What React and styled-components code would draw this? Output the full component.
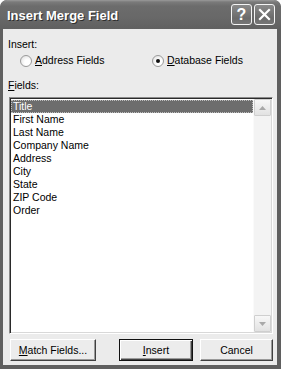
import React from "react";
import styled, { createGlobalStyle } from "styled-components";

const GlobalStyle = createGlobalStyle`
  html, body {
    margin: 0;
    padding: 0;
    background: #ffffff;
  }
  body {
    font-family: "Liberation Sans", Arial, sans-serif;
  }
`;

const Window = styled.div`
  width: 281px;
  height: 369px;
  box-sizing: border-box;
  display: flex;
  flex-direction: column;
  background: #5f5f5f;
  border-radius: 7px 7px 0 0;
  padding: 0 4px 4px 3px;
  overflow: hidden;
`;

const TitleBar = styled.div`
  height: 29px;
  margin: 0 -4px 0 -3px;
  padding: 0 6px 0 7px;
  box-sizing: border-box;
  display: flex;
  align-items: center;
  border-radius: 7px 7px 0 0;
  background: linear-gradient(#9a9a9a 0, #7a7a7a 2px, #6c6c6c 6px, #686868 60%, #606060 100%);
`;

const Title = styled.div`
  flex: 1;
  color: #ffffff;
  font-weight: bold;
  font-size: 13px;
  padding-top: 1px;
  text-shadow: 1px 1px 0 #2e2e2e;
`;

const CaptionButton = styled.div`
  width: 21px;
  height: 21px;
  box-sizing: border-box;
  margin-left: 2px;
  border: 1px solid #f4f4f4;
  border-radius: 3px;
  background: linear-gradient(#8a8a8a, #6a6a6a 70%, #767676);
  display: flex;
  align-items: center;
  justify-content: center;
  color: #ffffff;
  font-family: "Liberation Sans", Arial, sans-serif;
  font-weight: bold;
  font-size: 16px;
  line-height: 1;
`;

const Body = styled.div`
  flex: 1;
  display: flex;
  flex-direction: column;
  background: #ebebeb;
  padding: 9px 4px 4px 5px;
  font-size: 10.5px;
  line-height: 13px;
  color: #000000;
`;

const Label = styled.div`
  height: 13px;
  margin-top: ${(p) => p.$top || 0}px;
`;

const RadioRow = styled.div`
  display: flex;
  height: 13px;
  margin-top: 3px;
  padding-left: 12px;
`;

const RadioOption = styled.label`
  display: flex;
  align-items: center;
  width: ${(p) => p.$width}px;
  gap: 3px;
`;

const RadioCircle = styled.span`
  width: 12px;
  height: 12px;
  box-sizing: border-box;
  border-radius: 50%;
  border: 1px solid #9a9a9a;
  background: radial-gradient(circle at 65% 65%, #ffffff 30%, #dadada 100%);
  display: flex;
  align-items: center;
  justify-content: center;
  &::after {
    content: "";
    width: 4px;
    height: 4px;
    border-radius: 50%;
    background: ${(p) => (p.$checked ? "#111111" : "transparent")};
  }
`;

const ListBox = styled.div`
  height: 237px;
  margin: 5px 0 0 1px;
  box-sizing: border-box;
  display: flex;
  background: #ffffff;
  border: 1px solid;
  border-color: #8a8a8a #ffffff #ffffff #8a8a8a;
  box-shadow: inset 1px 1px 0 #2a2a2a, inset -1px -1px 0 #d8d8d8;
  padding: 1px;
`;

const Items = styled.div`
  flex: 1;
  padding-top: 1px;
`;

const Item = styled.div`
  height: 13px;
  line-height: 13px;
  padding-left: 2px;
  box-sizing: border-box;
  background: ${(p) => (p.$selected ? "#6d6d6d" : "transparent")};
  color: ${(p) => (p.$selected ? "#ffffff" : "#000000")};
  outline: ${(p) => (p.$selected ? "1px dotted #bdbdbd" : "none")};
  outline-offset: -1px;
`;

const ScrollBar = styled.div`
  width: 17px;
  display: flex;
  flex-direction: column;
  justify-content: space-between;
  background: #f3f3f3;
  border-left: 1px solid #fafafa;
`;

const ScrollButton = styled.div`
  width: 17px;
  height: 17px;
  box-sizing: border-box;
  border: 1px solid #cfcfcf;
  border-radius: 1px;
  background: linear-gradient(#f7f7f7, #e2e2e2);
  display: flex;
  align-items: center;
  justify-content: center;
`;

const ButtonRow = styled.div`
  display: flex;
  align-items: center;
  gap: 7px;
  margin-top: 5px;
  padding-left: 2px;
`;

const Spacer = styled.div`
  flex: 1;
`;

const Button = styled.button`
  width: ${(p) => p.$width}px;
  height: 22px;
  box-sizing: border-box;
  padding: 0;
  font-family: "Liberation Sans", Arial, sans-serif;
  font-size: 10.5px;
  color: #000000;
  background: #ececec;
  border: 1px solid;
  border-color: ${(p) => (p.$default ? "#111111" : "#ffffff #404040 #404040 #ffffff")};
  box-shadow: ${(p) =>
    p.$default
      ? "inset 1px 1px 0 #ffffff, inset -1px -1px 0 #404040, inset -2px -2px 0 #9a9a9a"
      : "inset -1px -1px 0 #9a9a9a"};
`;

function Arrow({ up }) {
  return (
    <svg width="7" height="4" viewBox="0 0 7 4">
      <path d={up ? "M0 4 L3.5 0 L7 4 Z" : "M0 0 L3.5 4 L7 0 Z"} fill="#a8a8a8" />
    </svg>
  );
}

const fields = [
  "Title",
  "First Name",
  "Last Name",
  "Company Name",
  "Address",
  "City",
  "State",
  "ZIP Code",
  "Order",
];

export default function App() {
  return (
    <>
      <GlobalStyle />
      <Window>
        <TitleBar>
          <Title>Insert Merge Field</Title>
          <CaptionButton>?</CaptionButton>
          <CaptionButton>
            <svg width="13" height="13" viewBox="0 0 13 13">
              <path d="M2 2 L11 11 M11 2 L2 11" stroke="#ffffff" strokeWidth="2.2" strokeLinecap="square" />
            </svg>
          </CaptionButton>
        </TitleBar>
        <Body>
          <Label>Insert:</Label>
          <RadioRow>
            <RadioOption $width={132}>
              <RadioCircle />
              <span>
                <u>A</u>ddress Fields
              </span>
            </RadioOption>
            <RadioOption $width={120}>
              <RadioCircle $checked />
              <span>
                <u>D</u>atabase Fields
              </span>
            </RadioOption>
          </RadioRow>
          <Label $top={12}>
            <u>F</u>ields:
          </Label>
          <ListBox>
            <Items>
              {fields.map((f, i) => (
                <Item key={f} $selected={i === 0}>
                  {f}
                </Item>
              ))}
            </Items>
            <ScrollBar>
              <ScrollButton>
                <Arrow up />
              </ScrollButton>
              <ScrollButton>
                <Arrow />
              </ScrollButton>
            </ScrollBar>
          </ListBox>
          <ButtonRow>
            <Button $width={86}>
              <u>M</u>atch Fields...
            </Button>
            <Spacer />
            <Button $width={74} $default>
              <u>I</u>nsert
            </Button>
            <Button $width={73}>Cancel</Button>
          </ButtonRow>
        </Body>
      </Window>
    </>
  );
}
